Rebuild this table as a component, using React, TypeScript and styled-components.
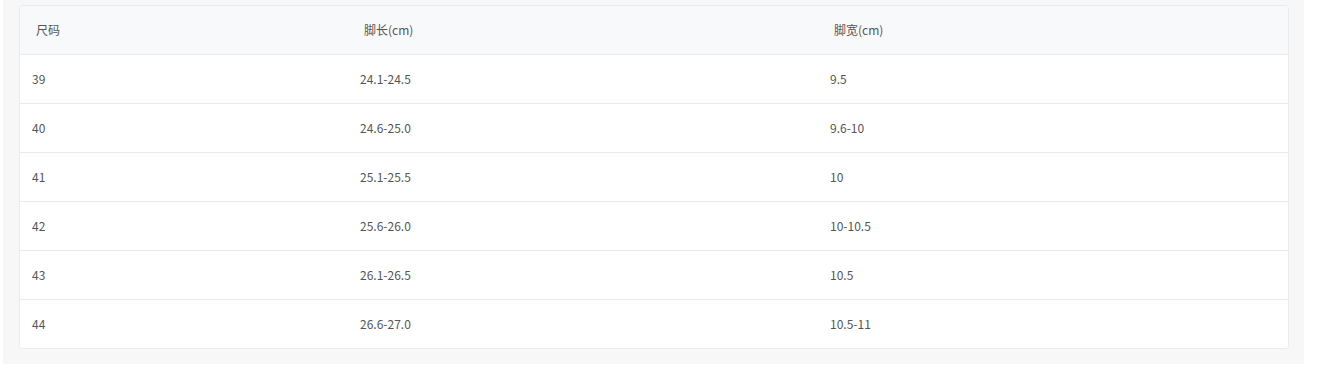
import React from "react";
import styled, { createGlobalStyle } from "styled-components";

const Global = createGlobalStyle`
  html, body { margin: 0; padding: 0; background: #ffffff; }
  body { font-family: "Noto Sans CJK SC", "Noto Sans", "Liberation Sans", sans-serif; }
`;

const Panel = styled.div`
  margin-left: 3px;
  width: 1301px;
  box-sizing: border-box;
  padding: 5px 15px 15px 16px;
  background: #f7f7f7;
`;

const Table = styled.div`
  background: #ffffff;
  border: 1px solid #ebebeb;
  border-radius: 4px;
  overflow: hidden;
`;

const Row = styled.div<{ $head?: boolean }>`
  display: grid;
  grid-template-columns: 328px 470px 1fr;
  height: ${(p) => (p.$head ? 48 : 49)}px;
  align-items: center;
  background: ${(p) => (p.$head ? "#f8f9fa" : "#ffffff")};
  border-top: ${(p) => (p.$head ? "none" : "1px solid #ebebeb")};
  box-sizing: border-box;
`;

const Cell = styled.div<{ $head?: boolean }>`
  padding-left: ${(p) => (p.$head ? 16 : 12)}px;
  font-size: 12px;
  line-height: 16px;
  color: #555555;
  font-family: "Noto Sans CJK SC", "Open Sans", sans-serif;
`;

const rows = [
  ["39", "24.1-24.5", "9.5"],
  ["40", "24.6-25.0", "9.6-10"],
  ["41", "25.1-25.5", "10"],
  ["42", "25.6-26.0", "10-10.5"],
  ["43", "26.1-26.5", "10.5"],
  ["44", "26.6-27.0", "10.5-11"],
];

export default function App() {
  return (
    <>
      <Global />
      <Panel>
        <Table>
          <Row $head>
            <Cell $head>尺码</Cell>
            <Cell $head>脚长(cm)</Cell>
            <Cell $head>脚宽(cm)</Cell>
          </Row>
          {rows.map((r) => (
            <Row key={r[0]}>
              {r.map((c, i) => (
                <Cell key={i}>{c}</Cell>
              ))}
            </Row>
          ))}
        </Table>
      </Panel>
    </>
  );
}
